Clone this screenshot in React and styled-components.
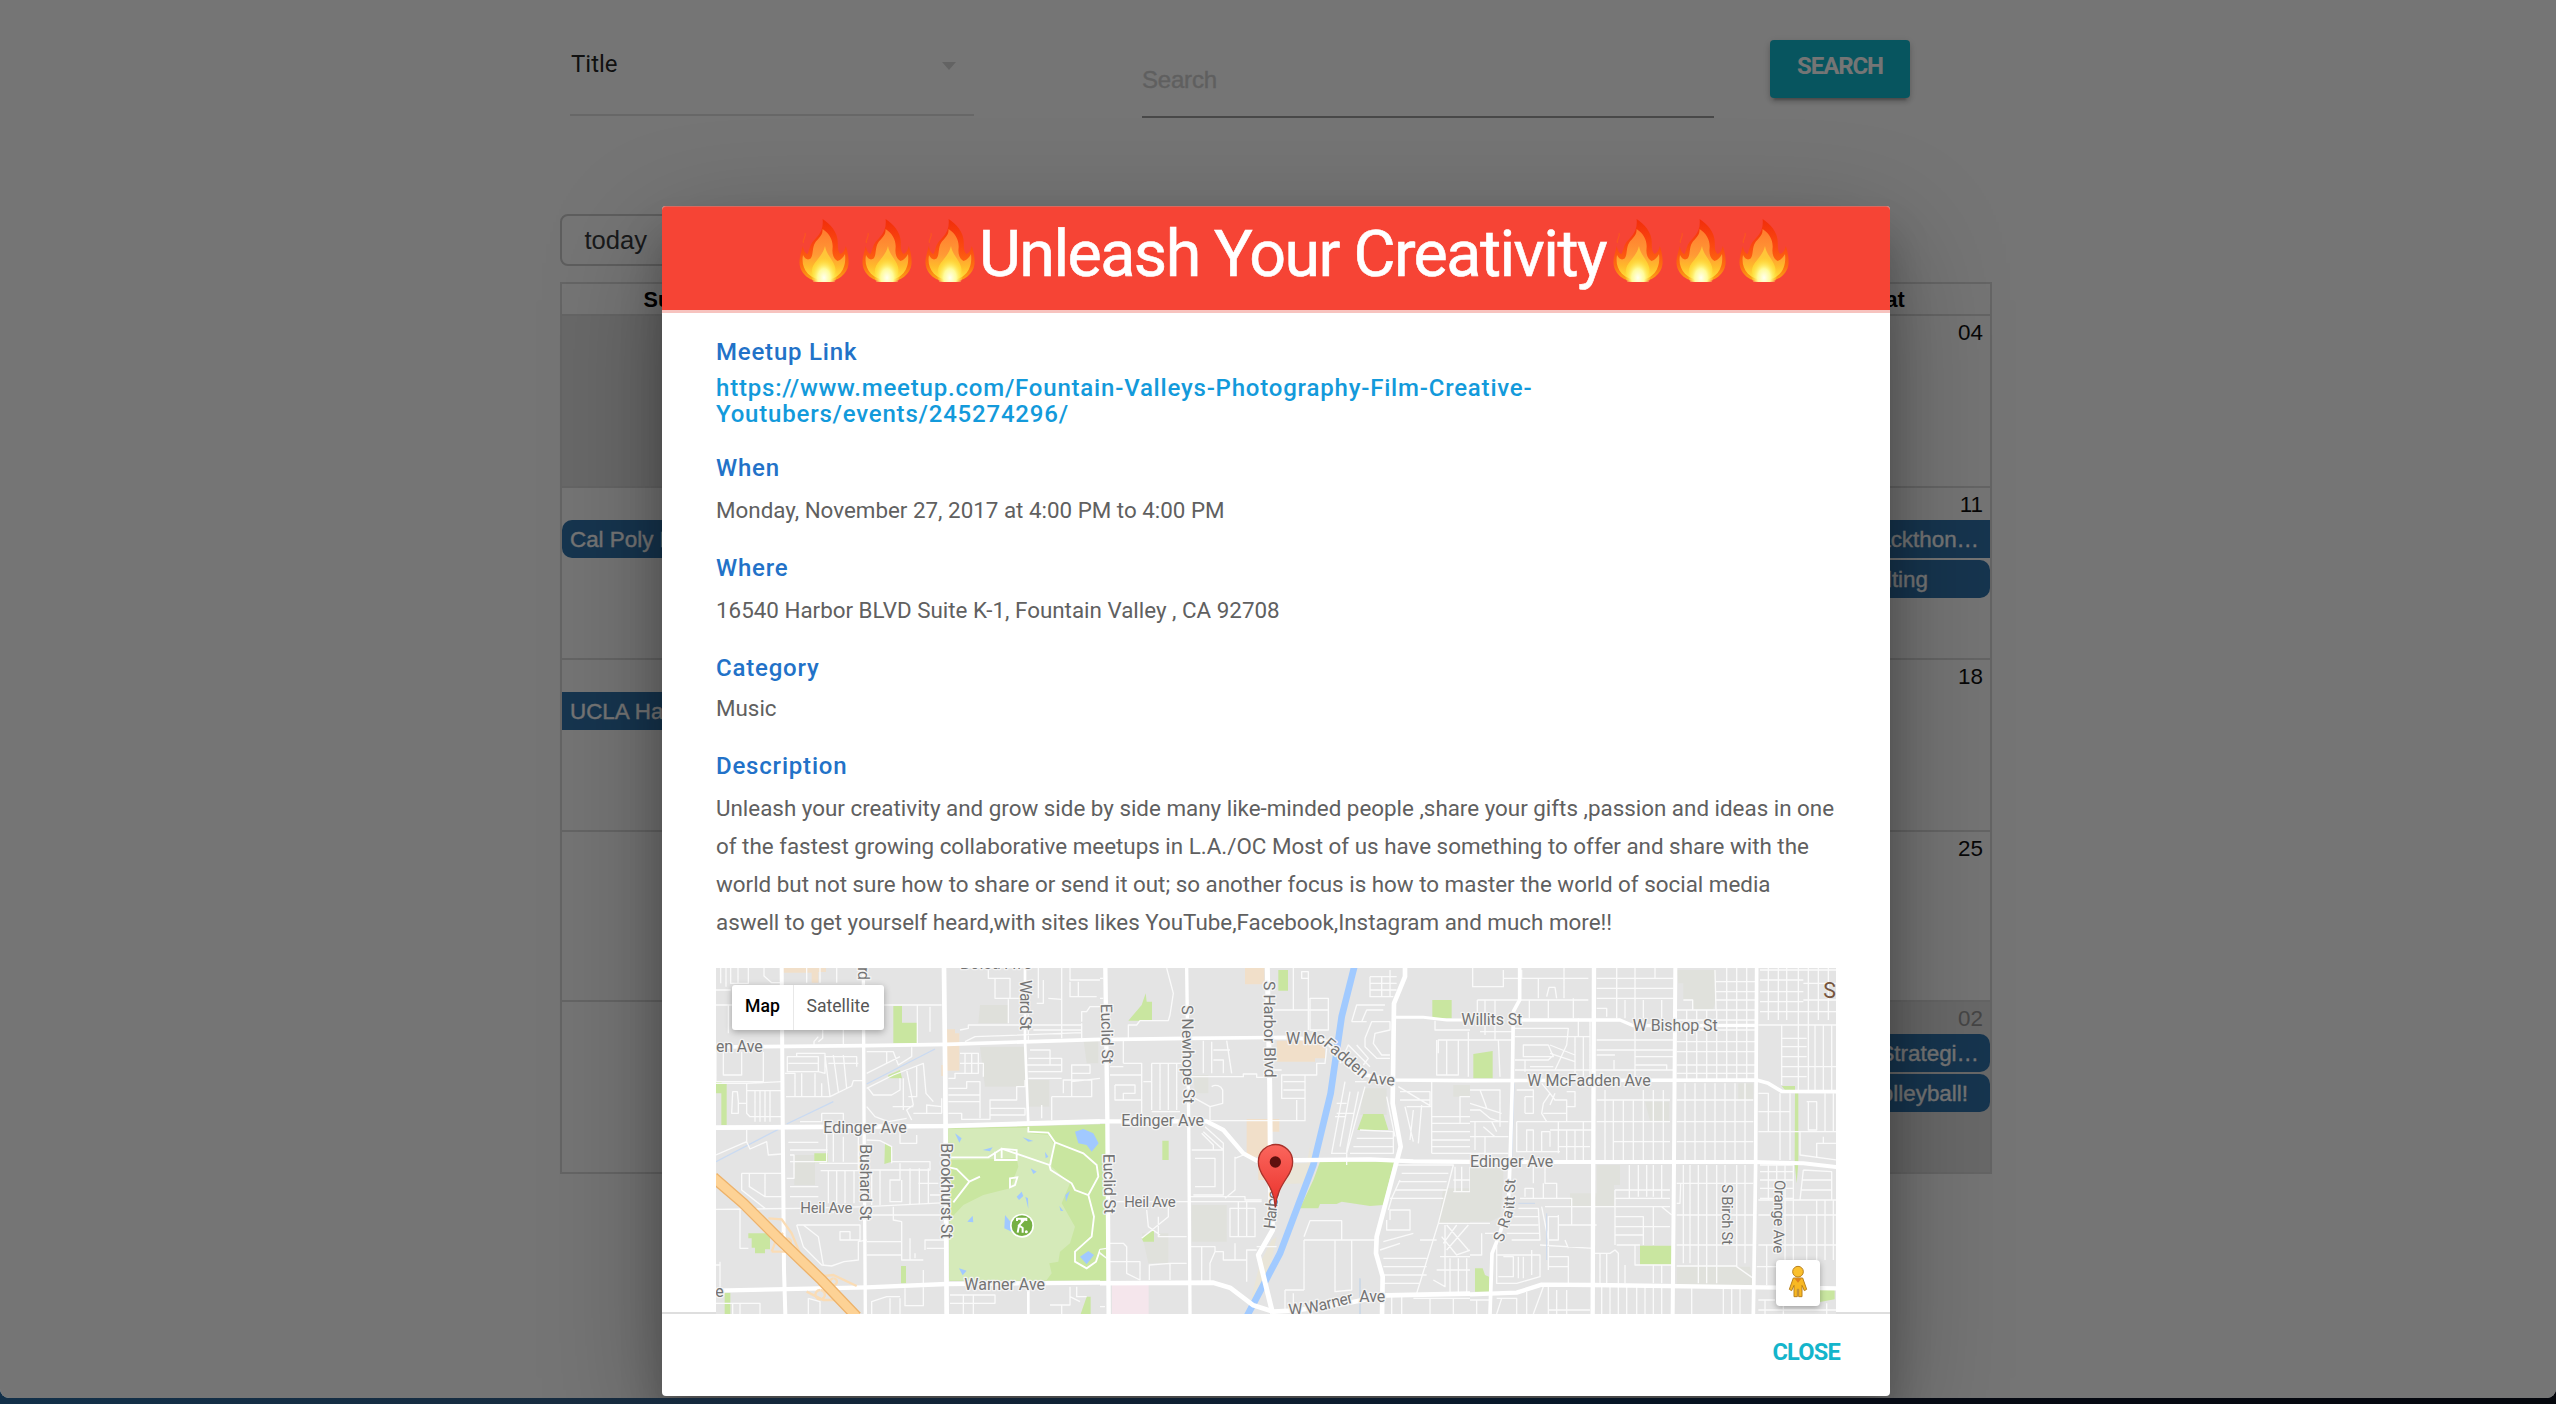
import React from "react";
import styled, { createGlobalStyle } from "styled-components";

const GlobalStyle = createGlobalStyle`
  * { box-sizing: border-box; }
  html, body { margin: 0; padding: 0; }
  body {
    width: 2556px;
    height: 1404px;
    overflow: hidden;
    background: linear-gradient(90deg, #123049 0%, #172c40 22%, #0c1c2e 52%, #061627 62%, #060a14 74%, #05070d 100%);
  }
`;

const helvetica = `"Liberation Sans", Arial, sans-serif`;
const roboto = `Roboto, "Liberation Sans", sans-serif`;

/* ---------- page ---------- */

const Window = styled.div`
  position: relative;
  width: 2556px;
  height: 1398px;
  overflow: hidden;
  background: #fff;
  border-radius: 0 0 9px 9px;
`;

const Page = styled.main`
  width: 1432px;
  margin-left: 560px;
  font-family: ${helvetica};
`;

const Filters = styled.div`
  display: flex;
  align-items: flex-start;
  height: 214px;
  padding-left: 10px;
`;

const Select = styled.div`
  display: flex;
  justify-content: space-between;
  align-items: flex-start;
  width: 404px;
  height: 116px;
  margin-right: 168px;
  padding: 48px 18px 0 1px;
  border-bottom: 2px solid #e0e0e0;
  font: 24px/32px ${roboto};
  color: rgba(0, 0, 0, 0.87);
`;

const Caret = styled.span`
  margin-top: 14px;
  border: 7.5px solid transparent;
  border-top: 8px solid #d8d8d8;
  border-bottom: 0;
`;

const SearchField = styled.div`
  width: 572px;
  height: 118px;
  margin-right: 56px;
  padding-top: 64px;
  border-bottom: 2px solid #9e9e9e;
  font-size: 24px;
  line-height: 32px;
  letter-spacing: -0.2px;
  color: #d0d0d0;
  -webkit-text-stroke: 0.4px #d0d0d0;
`;

const SearchButton = styled.button`
  width: 140px;
  height: 58px;
  margin: 40px 0 0;
  padding: 0 0 6px;
  border: 0;
  border-radius: 4px;
  background: #10bad0;
  box-shadow: 0 4px 5px rgba(0, 0, 0, 0.14), 0 2px 10px rgba(0, 0, 0, 0.12), 0 6px 2px -4px rgba(0, 0, 0, 0.2);
  color: #fff;
  font: 700 24px/32px ${roboto};
  letter-spacing: -1.1px;
`;

const TodayButton = styled.button`
  display: block;
  width: 120px;
  height: 52px;
  margin: 0 0 16px;
  padding: 0 0 0 22.5px;
  border: 2px solid #ccc;
  border-radius: 8px;
  background: #fff;
  color: #373a3c;
  font: 25.6px/43px ${helvetica};
  text-align: left;
`;

const Calendar = styled.section`
  border: 2px solid #ddd;
  font-size: 22.4px;
`;

const WeekHeader = styled.div`
  display: grid;
  grid-template-columns: repeat(7, 1fr);
  height: 30px;
  font-weight: bold;
  font-size: 21.6px;
  line-height: 31px;
  text-align: center;
`;

const Week = styled.div`
  display: grid;
  grid-template-columns: repeat(7, 1fr);
  grid-template-rows: 30px repeat(2, 38px);
  row-gap: 2px;
  height: ${(p) => p.$height}px;
  border-top: 2px solid #ddd;
`;

const DateCell = styled.div`
  grid-row: 1 / 4;
  grid-column: ${(p) => p.$col};
  height: ${(p) => p.$height}px;
  padding: 3px 7px 0 0;
  line-height: 28px;
  text-align: right;
  color: ${(p) => (p.$off ? "#999" : "#111")};
  background: ${(p) => (p.$off ? "#e4e4e4" : "transparent")};
`;

const Event = styled.div`
  grid-column: ${(p) => p.$cols};
  grid-row: ${(p) => p.$line};
  padding: ${(p) => (p.$end ? `0 ${p.$end}px 0 0` : "0 0 0 8px")};
  border-radius: ${(p) => p.$radius};
  background: #3174ad;
  color: #fff;
  -webkit-text-stroke: 0.35px #fff;
  line-height: 40px;
  white-space: nowrap;
  overflow: hidden;
  text-align: ${(p) => (p.$end ? "right" : "left")};
`;

/* ---------- dialog ---------- */

const Overlay = styled.div`
  position: absolute;
  inset: 0;
  display: flex;
  justify-content: flex-start;
  padding: 206px 0 0 662px;
  background: rgba(0, 0, 0, 0.54);
`;

const Dialog = styled.div`
  display: flex;
  flex-direction: column;
  width: 1228px;
  height: 1190px;
  border-radius: 4px;
  background: #fff;
  box-shadow: 0 38px 120px rgba(0, 0, 0, 0.3), 0 30px 40px rgba(0, 0, 0, 0.22);
  font-family: ${roboto};
`;

const DialogHeader = styled.header`
  display: flex;
  align-items: flex-start;
  height: 107px;
  padding: 12px 0 0 130px;
  border-top: 1px solid #d9695f;
  border-bottom: 3px solid #f7c3bf;
  border-radius: 4px 4px 0 0;
  background: #f64435;
  color: #fff;
`;

const DialogTitle = styled.h1`
  margin: -1px 0 0 -2px;
  width: 627px;
  font-size: 64.6px;
  font-weight: 400;
  line-height: 72px;
  letter-spacing: -1.56px;
  white-space: nowrap;
  -webkit-text-stroke: 0.6px #fff;
`;

const FlameBox = styled.span`
  display: flex;
  justify-content: center;
  width: 63px;
  svg { display: block; width: 50px; height: 63px; }
`;

const DialogBody = styled.div`
  height: 1001px;
  padding: 26px 54px 0;
`;

const Field = styled.section`
  margin-bottom: ${(p) => p.$after}px;
`;

const Label = styled.h2`
  margin: 0 0 ${(p) => p.$gap}px;
  color: #2272c8;
  font-size: 24px;
  font-weight: 500;
  line-height: 26px;
  letter-spacing: 0.8px;
`;

const MeetupLink = styled.a`
  display: block;
  width: 900px;
  color: #139adb;
  font-size: 24px;
  font-weight: 500;
  line-height: 26px;
  letter-spacing: 0.8px;
`;

const Value = styled.p`
  margin: 0;
  color: #606060;
  font-size: 22.39px;
  line-height: 38px;
  white-space: nowrap;
`;

const MapFrame = styled.div`
  position: relative;
  width: 1120px;
  height: 346px;
  background: #e4e4e4;
  overflow: hidden;
  > svg { display: block; }
`;

const MapTypes = styled.div`
  position: absolute;
  left: 16px;
  top: 17px;
  display: flex;
  height: 45px;
  border-radius: 3px;
  background: #fff;
  box-shadow: 0 2px 7px rgba(0, 0, 0, 0.3);
`;

const MapType = styled.div`
  width: ${(p) => p.$width}px;
  color: ${(p) => (p.$active ? "#000" : "#555")};
  font-size: 17.6px;
  font-weight: ${(p) => (p.$active ? 500 : 400)};
  line-height: 42px;
  text-align: center;
  & + & { border-left: 1px solid #e8e8e8; padding-right: 2px; }
`;

const Pegman = styled.div`
  position: absolute;
  left: 1060px;
  top: 292px;
  display: flex;
  align-items: center;
  justify-content: center;
  width: 44px;
  height: 46px;
  padding-bottom: 4px;
  border-radius: 4px;
  background: #fff;
  box-shadow: 0 2px 6px rgba(0, 0, 0, 0.3);
`;

const DialogFooter = styled.footer`
  flex: 1;
  display: flex;
  justify-content: flex-end;
  align-items: flex-start;
  margin-top: -2px;
  padding: 24px 50px 0 0;
  background: linear-gradient(#dedede, #dedede) left top / 54px 2px no-repeat,
    linear-gradient(#dedede, #dedede) right top / 54px 2px no-repeat;
  border-radius: 0 0 4px 4px;
`;

const CloseButton = styled.button`
  padding: 0;
  border: 0;
  background: none;
  color: #14b5cb;
  font: 700 23.6px/32px ${roboto};
  letter-spacing: -0.8px;
`;

/* ---------- drawings ---------- */

const Flame = () => (
  <FlameBox>
    <svg viewBox="0 0 50 63">
      <defs>
        <linearGradient id="fl-outer" x1="0" y1="0" x2="0" y2="1">
          <stop offset="0" stopColor="#f22d0a" />
          <stop offset=".45" stopColor="#fb4a10" />
          <stop offset=".75" stopColor="#fd6d11" />
          <stop offset="1" stopColor="#fbae17" />
        </linearGradient>
        <linearGradient id="fl-mid" x1="0" y1="0" x2="0" y2="1">
          <stop offset="0" stopColor="#ff7a2e" />
          <stop offset=".5" stopColor="#ff9a35" />
          <stop offset=".72" stopColor="#ffb92b" />
          <stop offset="1" stopColor="#ffe63a" />
        </linearGradient>
        <radialGradient id="fl-core" cx=".5" cy=".72" r=".5">
          <stop offset="0" stopColor="#fffff0" />
          <stop offset=".45" stopColor="#fffb9a" />
          <stop offset="1" stopColor="#ffe335" stopOpacity="0" />
        </radialGradient>
      </defs>
      <path d="M23.6 0C31 5 39 13 38.800 24C38.700 29 39 33 41.500 35C44 34 46 31 46.800 27C48.500 32 50 39 49.500 45C48.500 55 39 63 25 63C11 63 1 55 .5 44C.3 38 2.500 33 3.800 27C4.500 31 6 34.500 8.500 35C10.500 31 10.500 27 13.500 23C17 18 25 14 23.600 0Z" fill="url(#fl-outer)" />
      <path d="M23.500 10C31 15 34.500 22 33.500 30C33 36 35 40 38.500 42C42 41 44.500 38 46 35C47.500 47 43 60 25 61.500C9 60 1.500 49 4 36C6 40 9 42 12 39C14.500 35 13 29 16 24C19 19 24 17 23.500 10Z" fill="url(#fl-mid)" />
      <path d="M26 27C27 34 31 37 35 45C39 53 34 62 25 62C15 62 11 54 14 47C17 41 24 36 26 27Z" fill="#ffe23c" opacity=".6" />
      <ellipse cx="25" cy="50" rx="14" ry="20" fill="url(#fl-core)" />
      <path d="M6 14C8 18 3 20 4.500 24" fill="none" stroke="#fb5522" strokeWidth="1.200" />
    </svg>
  </FlameBox>
);

const flames = [0, 1, 2];

const MajorRoad = ({ d, w = 12 }) => (
  <path d={d} fill="none" stroke="#fff" strokeWidth={w} strokeLinejoin="round" />
);
const MinorRoads = ({ d }) => <path d={d} fill="none" stroke="#fafafa" strokeWidth="4" strokeLinejoin="round" />;
const Park = ({ d }) => <path d={d} fill="#c9e6a0" />;

const RoadLabel = ({ x, y, len, turn = 0, size = 48, children }) => (
  <text
    x={x}
    y={y}
    textLength={len}
    fontSize={size}
    transform={turn ? `rotate(${turn} ${x} ${y})` : undefined}
    fill="#737373"
    stroke="#f3f3f3"
    strokeWidth="8"
    strokeLinejoin="round"
    paintOrder="stroke"
  >
    {children}
  </text>
);

const WestRoads = () => (
  <g transform="translate(-16 -18) scale(.33333)">
    <path d="M840 290H975V410H855ZM840 165H925V220H835ZM985 390H1048V470H985ZM283 615H345V705H283ZM1150 265H1195V340H1160Z" fill="#dfe0db" />
    <path d="M250 54H378V66H355V98H335V68H250ZM740 238H765V250H778V362H740V378H724V345H740Z" fill="#f1dfc9" />
    <Park d="M580 168H606V218H652V280H580ZM565 375L600 360L606 385H565ZM48 395H65V402H80V525H64V430H48ZM343 610H383V637H343ZM555 580L577 592L575 635L553 642ZM145 850H210V898H195V910H165V893H155V865H145ZM603 948H618V1000H603ZM74 1028H91V1092H74ZM1160 1040H1172V1092H1142Z" />
    <Park d="M745 535L1222 522V992H748Z" />
    <path d="M745 537L980 533L990 550L1045 555L1060 580L1055 650L1110 700L1085 760L1125 830L1110 880L1080 905L1075 935L1048 940L1055 970L1040 990H748V810L790 765L850 735L930 715L955 650L950 625L870 628L745 630Z" fill="#d5eab9" />
    <path d="M1125 545L1150 537L1180 550L1196 580L1175 605L1160 585L1135 580ZM1140 920L1165 903L1182 915L1160 943ZM765 550L785 565L778 578ZM848 600L878 592L870 604ZM968 562L1000 573L985 575ZM992 655L1010 665L1000 672ZM950 740L965 725L970 738L957 750ZM976 740L984 745L985 777ZM1096 735L1110 722L1098 755ZM802 815L818 797L820 817ZM777 955L800 962L788 976ZM915 795L935 820V845L913 835ZM1035 605L1045 620L1037 625ZM1078 768L1090 783H1082Z" fill="#a1c9ff" />
    <path d="M48 635L235 538M260 522L400 455M500 402L705 297" stroke="#c9daf2" strokeWidth="4" fill="none" />
    <path d="M748 622H865L905 596L1048 645L1052 660L1115 700L1125 720L1165 735L1195 680L1190 645L1150 610L1065 577L1045 548L985 545V530M1050 645L1065 577M748 652L770 657L808 695L840 680M808 695L760 757M1165 735L1182 800L1175 860L1125 905L1125 935L1160 955L1188 935L1200 900L1225 880M885 605V630H950V600L905 596V625M930 685L952 682L945 705L930 712Z" fill="none" stroke="#fff" strokeWidth="5.500" />
    <MinorRoads d="M48 120H92M92 54V100H145V54M62 54V100M78 54V110M114 54V100M192 54V78L215 98H245M320 54V98M360 54V98M48 165H245M165 120V240M85 165V250M410 54V98M48 305V395H190V305M125 305V375H70V305M48 400L140 400L245 395M140 400V490L150 500H245M98 425H112L115 455V490H95ZM165 420V515M180 420V515M195 420V515M210 420V515M115 460H140M142 422H245M262 320H355V365H262ZM265 340H355M290 320V310H375V370L355 365M375 315L390 440M400 315L415 425M430 315L440 415M375 320H470V350M258 440H390L455 408L460 392H490M255 370H285V440M305 370V440M345 370V440M365 400V440M385 340L475 340M355 260L342 275V290M368 240V265L355 275M430 240V285M500 305H580L595 345L635 320V292M500 370L600 320M500 415L580 375L670 340L678 430L700 455M560 305V340M620 360L640 465L620 480L635 510M650 350V440L625 440M500 470L525 500L565 515L620 505M505 415L520 435H575L600 420V385M610 385V480M578 470H640M640 490H725V445M680 490V465L725 470M690 170V245M652 165V280M550 165H725M48 615L140 575L150 597L200 575L205 615L245 612M140 575V540M125 670H245M125 670V720L195 775M148 672V710L195 740H245M195 672V740M265 577H355M380 545V635H270M270 600H383M270 710H355M270 740H355M365 490H430V530M365 490V515H300M400 545V635M430 560V635M358 640H500M362 662H490M385 662V760M410 662V760M435 662V760M462 662V760M475 545V660M270 615H282V685H260M500 570L540 572L575 590V640M600 540V580H650V555M575 635H690V660H500M600 640V690H570V755H605V690M630 655V765M658 655V765M685 655V765M515 660V765M540 660V765M655 700H715M690 735H740M48 778L300 775L500 770L740 758M120 778V895H145M395 775L400 790M290 825H480V870H420V845H450V870M290 825L310 890L365 945L395 948L432 935L475 930V875L500 870M310 825L355 860L370 945M500 795H740M580 770V810L605 815V895M500 875H605V930H670M630 865V930M500 915H605M675 900V870H740M680 895H740M670 960V1000M645 925V910M60 935V1010M48 945H60M48 1060H180V1092M98 1060V1092M120 1060V1092M325 1045L360 1055V1092M515 1092V1055L560 1040H600M570 1045V1092M600 1045V1092M615 1015V1067H670V1012M325 1092V1045M750 1060H885V1035H750M790 1035V1092M820 1035V1092M1050 1065H1110V1010M1085 1065V1092M1110 1040L1140 1055M1130 1010V1040H1160M865 54V85H885V145H960M885 85H930V145M780 240L805 235V225H1145V240H1000M795 275L825 260L1145 248M1145 220V265M925 148V220M1015 54V145M1085 54V265M1110 54V90H1200M1110 95V140H1190M1135 95V140M1030 90V160H1010M1045 145L1085 148M1200 170H1170L1160 185H1145V215M975 165H985V270M990 300H1050V345H1085V365H985M780 310H835V370H765V385H745M795 310V370M815 310V370M780 340H850V380M745 415H800V395H840V505M745 435H840M745 455H840M745 490H785V508H870V450H950V410H975V390M870 475H975V495H870M1025 465V505M1055 440V510M1055 440H1175V390H1090V430M985 385H1085M1115 345H1170V370H1115ZM1115 345V440M1115 395L1200 385M980 345H1085V325H985" />
    <MajorRoad d="M975 54V270L985 525M985 1000V1092" w={8} />
    <MajorRoad d="M245 54L248 500L252 960L256 1092" />
    <MajorRoad d="M490 54L492 500L496 1092" w={10} />
    <MajorRoad d="M732 54L736 400L740 1092" w={14} />
    <MajorRoad d="M48 291L500 287L740 283L1200 268" w={11} />
    <MajorRoad d="M48 533L740 528L1200 514" w={14} />
    <MajorRoad d="M48 1022L500 1012L740 1002L1200 998" w={13} />
    <path d="M205 805L245 808L275 850L300 910M215 905L232 860L250 850M215 905H255L240 880M320 1025L370 1050H410M350 980L400 975L470 1008M360 1020A14 14 0 1 0 361 1020M400 985A10 10 0 1 0 401 985M262 865A10 10 0 1 0 263 865" fill="none" stroke="#fadcb5" strokeWidth="7" />
    <path d="M40 682L130 760L235 865L365 990L470 1100" fill="none" stroke="#edb26a" strokeWidth="34" />
    <path d="M40 682L130 760L235 865L365 990L470 1100" fill="none" stroke="#fdd295" strokeWidth="26" />
    <RoadLabel x={780} y={58} len={215}>Bolsa Ave</RoadLabel>
    <RoadLabel x={475} y={52} len={38} turn={90}>rd</RoadLabel>
    <RoadLabel x={960} y={90} len={150} turn={90}>Ward St</RoadLabel>
    <RoadLabel x={48} y={305} len={140}>en Ave</RoadLabel>
    <RoadLabel x={370} y={549} len={250}>Edinger Ave</RoadLabel>
    <RoadLabel x={480} y={583} len={228} turn={90}>Bushard St</RoadLabel>
    <RoadLabel x={724} y={580} len={286} turn={90}>Brookhurst St</RoadLabel>
    <RoadLabel x={301} y={790} len={156} size={45}>Heil Ave</RoadLabel>
    <RoadLabel x={793} y={1021} len={242}>Warner Ave</RoadLabel>
    <RoadLabel x={46} y={1042} len={22}>e</RoadLabel>
    <circle cx="966" cy="827" r="36" fill="#fff" />
    <circle cx="966" cy="827" r="31" fill="#76b043" />
    <path d="M951 813V806H979V813M962 812H970L957 826L968 834V848M957 826L953 848" fill="none" stroke="#fff" strokeWidth="6" />
    <circle cx="979" cy="845" r="4.500" fill="#fff" />
  </g>
);

const CentralRoads = () => (
  <g transform="translate(364 -18) scale(.33333)">
    <Park d="M0 524L82 521V992H0Z" />
    <path d="M590 272H735V325H705V335H590ZM495 54H553V103H495ZM500 507H598V545H575V690H535V620H500Z" fill="#f1dfc9" />
    <path d="M690 590L700 640L680 700L620 702L560 690V640H680ZM590 860L560 1000L500 1092L510 1060L540 940L575 870Z" fill="#e9e5d8" />
    <path d="M335 765H440V875H335ZM185 850H265V940H205ZM340 375H385V430H345ZM850 415H920V495H840ZM0 275H60V340H0ZM1090 715H1200V820H1075ZM1120 405H1175V440H1120Z" fill="#e0e1dc" />
    <path d="M96 1005H206V1092H96Z" fill="#f5e6ec" />
    <Park d="M595 60H624V122H595ZM197 130L200 155H216V212H145L185 165ZM1057 150H1115V205H1057ZM850 492H910L925 540H832ZM720 635H942L910 765L870 768L785 755L770 762H720L715 775H660L700 690ZM247 572H266V630H247ZM185 865L222 840V875H190ZM1180 310H1200V385H1180ZM1188 955H1200V1020H1188ZM15 1050L35 1040L32 1060L15 1092H0Z" />
    <MinorRoads d="M0 85H70M0 110H45V145H0M45 145H70M0 195H15V185H70M130 340V268M130 340H185V500M260 54L280 130L270 195L265 212H180L170 225H145V268M90 350H130M90 375H185V450H105M105 405H165V430H130V450H105V405M0 390H30V440H0M215 340H320M215 340V480M240 340V480M265 340V480M290 340V480M190 395H215M215 485H300M320 380H490V372H530V382H565M370 272V370M395 275V370M400 300H450M400 330H430V370M440 272L455 370M395 410A22 22 0 0 1 428 420V460L390 470L345 445M390 470V512M385 512H565M570 512H675V375H605V445H675M610 395H675M610 420H675M650 450V510M570 180H745V240H690V145H745V180M640 54V180M670 65H685V85H665V65ZM685 85V240M605 375H710V340H735L740 295M570 360H605M815 215L830 165H915M815 215H860M845 215L860 180H910M870 80V140H940M905 80V140M930 60V140M870 80H950M870 100H950M870 120H950M855 265L875 215H930V240L885 250L880 280L905 315H930M855 265V290L890 325L930 325M780 340L805 285L870 350M830 285L865 325L850 345M795 395L755 610H800L855 410M810 425L780 590M835 425L800 600M770 460H800M765 500H795M820 490L770 490M825 395H860M840 540L940 545V610H810M830 565H940M820 590H940M800 600V645M920 440L945 560M960 425H1050V470H980M960 450H1050M1000 480L990 570M1025 465L1015 580M955 410L1055 470V610M975 470L1000 575M1055 500H1200M1055 520H1200M1055 545H1200M1055 570H1200M1055 590H1200M1055 610H1200M1055 395V470M1200 440H1140V520M1065 212V240H1180V270H1075V310M1070 270V375H1135V270M1100 270V375M1165 245V380M335 600H430V735H340M345 625H405V710H345M430 660V600L370 545M365 550L400 585V600M375 530L430 580L430 600M465 625L490 615M435 745L465 720V620M330 740H495V750H545M90 755H545M155 755V755M130 755L185 770V750M200 780L205 830L240 855M265 755V800L185 865M235 800V860H320M450 755H545M450 775H525V860H450ZM475 755V860M500 755V860M90 880H130L140 890V970L180 990V935H90M208 990V945L270 940H320M270 940V990M330 890H405V905H430V930H500V995M405 905L390 940V995M365 890V995M465 930V880M500 930V900H530M530 890H590M672 860L690 812H785V870M672 870H885M672 870V1020M765 870V1025L815 1020V870M615 1020H672M615 1020V1085M640 1030V1070M930 810V780L990 780V840H920V810M945 645H1120L1075 820M965 670H1105M955 695H1100M945 720H1100M930 745H1090M925 780L935 745L960 690M1120 725H1200M1125 725V650M1145 725V650M1170 725V650M1200 690H1120M1075 820H1200M1075 820L1010 1030M1095 825V1010L1060 990M910 925H1040M910 950H1040M910 975H1040M910 1000H1020M960 880L900 900M1000 850L910 875M1020 870H1070M1080 920H1200M1070 960H1200V1020M1085 860L1130 915L1200 890M1100 825L1165 900M1130 825L1090 880M1165 825L1100 900M1110 925V1030M1135 925V1030M1160 925V1030M935 1030V1092M1000 1045H1200M965 1035V1092M1050 1045V1092M1120 1045V1092M0 635L40 650L55 680L20 735L45 790L30 860L0 890M0 735L20 735M0 950L25 950L60 910L80 925L50 900L80 895M20 1050V1092M0 1070H75" />
    <path d="M828 30L785 200L752 430L700 645L600 910L500 1100" fill="none" stroke="#a1caff" strokeWidth="20" />
    <path d="M0 550L30 537L55 575L45 605L0 575ZM0 920L20 903L42 912L15 943L0 935Z" fill="#a1c9ff" />
    <path d="M840 985V1092" stroke="#b9cfe8" strokeWidth="3" />
    <MajorRoad d="M76 54L82 500L86 1092" w={13} />
    <MajorRoad d="M320 54L326 500L330 1092" w={10} />
    <MajorRoad d="M562 54L569 400L572 740L578 840L535 915L578 1090" w={15} />
    <MajorRoad d="M0 270L320 265L640 262L740 275L830 370L940 390L1200 392" w={11} />
    <MajorRoad d="M0 514H380L430 540L490 610L530 632L870 628L1000 634L1200 636" w={13} />
    <MajorRoad d="M0 1000L400 998L450 1013L520 1066L580 1085L640 1082L800 1060L920 1036L1200 1030" w={14} />
    <MajorRoad d="M975 40V80L942 160L938 460L962 590L890 860L888 910L908 980L906 1100" w={14} />
    <MajorRoad d="M945 202H1030L1100 210H1200" w={9} />
    <RoadLabel x={62} y={162} len={180} turn={88.5}>Euclid St</RoadLabel>
    <RoadLabel x={305} y={166} len={295} turn={89}>S Newhope St</RoadLabel>
    <RoadLabel x={551} y={93} len={290} turn={89.5}>S Harbor Blvd</RoadLabel>
    <RoadLabel x={124} y={529} len={248}>Edinger Ave</RoadLabel>
    <RoadLabel x={70} y={612} len={180} turn={89}>Euclid St</RoadLabel>
    <RoadLabel x={133} y={772} len={154} size={45}>Heil Ave</RoadLabel>
    <RoadLabel x={728} y={286} len={158} turn={40}>Fadden</RoadLabel>
    <RoadLabel x={618} y={282} len={117}>W Mc</RoadLabel>
    <RoadLabel x={864} y={400} len={80} turn={5}>Ave</RoadLabel>
    <RoadLabel x={584} y={838} len={130} turn={-84}>Harbor</RoadLabel>
    <RoadLabel x={626} y={1096} len={42} turn={-4}>W</RoadLabel>
    <RoadLabel x={680} y={1093} len={146} turn={-14}>Warner</RoadLabel>
    <RoadLabel x={838} y={1056} len={78}>Ave</RoadLabel>
  </g>
);

const EastRoads = () => (
  <g transform="translate(754 -18) scale(.33333)">
    <path d="M620 60H738V150L730 178H672L665 150H640V100H625ZM0 650H100V700L90 800L60 815H0ZM380 645H450V705H432V770H300V730H380ZM620 950H840L850 1005H620ZM525 455H598V512H540ZM805 400H850V450H805Z" fill="#e0e1dc" />
    <Park d="M10 312L68 303V385H10ZM510 887H605V944H510ZM15 955H38L45 975L57 980V1025H15ZM1050 1018H1094V1048L1050 1056ZM935 408H975V420H945ZM975 430H985V640L980 700L974 640Z" />
    <MinorRoads d="M8 54V110H100V60M100 85H355M205 85V145M230 140L237 112H255L260 145M22 150H355M22 150V210M45 150V255M30 245H130M75 150V270M0 270H130M178 150V205M235 150V205M282 54V145M310 145V205M155 85V60M85 270L90 380M380 85H610M440 54V205M495 54V270M380 115H610M380 145H610M555 54V85M520 150V205M575 150V205M380 175H410V200M465 150V205M135 235H295L290 285L255 360M325 205V260M360 212V385M160 285H235L250 320H160ZM165 330H235L245 320M180 350H250M240 285L315 315V335L240 310M135 360H610M135 330H165V365M135 260H360M315 260V385M340 260V385M380 270H610M380 300H610M495 270V380M495 345H590V360M432 330V360M380 315H435M495 320H610M620 180H855M640 150H668V180M735 60L738 180M735 95H855M735 125H855M735 150H855M770 54V390M800 54V390M830 54V390M740 180V390M710 180V390M680 180V390M650 180V390M620 210H855M620 240H855M620 275H855M620 305H855M620 345H855M620 370H855M870 60H1100M870 90H1000M870 125H1000M870 155H1000M870 185H1000M895 54V210M925 54V210M950 54V210M985 54V420M1015 54V420M1045 54V210M1075 54V210M1000 100H1100M1000 150H1100M1000 185H1100M865 225H1100M935 225V405M935 265H1010M935 290H1010M935 320H1010M935 350H1010M935 380H1010M1035 225V420M1060 225V420M1085 225V420M1010 350H1100M0 420H90V530M0 460L95 490M30 420L45 460L50 475M0 480H30L60 505L90 515M0 515H115M0 560H115M15 515V600M40 530L75 560M65 515L80 545M0 610H115M45 560V610M140 420H190V490H165M165 440H190M165 440V490M215 400L240 430L220 460L215 490L230 515M240 430L255 450H290L290 515M255 430L240 465M290 425H315V470H290M220 490H290M140 515H370M140 515V605H215V545H240V590M170 605V540H190V605M240 540H370M265 515V610M290 540V630M315 540V630M340 515V630M150 605H270M265 590H360M430 450V630M405 420V630M380 450H600M460 450V630M490 450V630M520 420V630M550 420V630M580 420V630M380 515H600M430 575H600M645 400V630M675 400V630M705 400V630M735 400V630M765 400V630M795 400V630M825 400V630M620 450H850M620 515H850M620 575H850M865 430H895V545M865 485H960M865 545H1100M930 430V630M960 430V630M1010 455H1040V540H1015V455M1065 430V545M1090 430V545M990 545V615L1100 630M1040 620V580H1100M1060 560V580M478 645V745M505 645V740M530 645V740M550 645V740M575 645V745M435 720H600M435 745H600M380 770H600M435 720V885M435 800H520V885M435 830H600M550 770V885M575 770L605 795M435 855H520M225 770H380M380 825H265V800H235V870H265V795M225 645V700H260V745H220V700M190 745V715H165V740M150 745H305V825M305 770H380M145 775H205L210 870H125M130 800H205M120 825H205M110 850H210M215 770L235 870V960M190 645V700M45 850H80V915M35 850V915H0M0 820H60M80 915H210V980L140 1000H80V915M100 920H130V980H85M145 920V985M160 920V985M185 900V975M210 885L370 895M235 920H295V1000M235 950H295M285 870L295 895M370 910H420L435 900L445 910V1000M390 910V1000M410 910V1000M440 885H510M465 945V1000M495 885V945H605M550 945V1000M575 945V1000M640 645V940M660 645V940M685 645V1000M710 645V1000M740 645V1000M765 645V700M800 645V950L850 985M825 645V940M620 700H850M620 760H630L632 700M620 795H850M620 885H850M620 948H800M870 645H970M870 665H970M870 690H970M870 715H970M870 745H970M895 645V750M920 645V700M945 645V930M970 645V930M865 750H1100M865 795H1100M865 885H1100M1000 660L1085 665V750H990L1000 660M995 690H1085M995 720H1085M1040 750V930M1065 750V930M1090 750V930M1010 795V930M860 950H920M890 885V1005M235 1010V1092M260 1020V1092M290 1020V1092M220 1010L190 1092M80 1045H140V1092M95 1045L80 1092M170 1025V1092M0 1050H60M20 1050V1092M395 1010V1092M420 1010V1092M445 1010V1092M470 1010V1092M500 1010V1092M525 1010V1092M550 1010V1092M575 1010V1092M665 1015V1092M760 1015V1092M785 1015V1092M810 1015V1092M865 1050H915M885 1050V1092M865 1080H1100M235 1080H360M940 1060V1092M1070 1060V1092" />
    <path d="M132 400L125 640M145 760H195M230 790V930" stroke="#ccd9ec" strokeWidth="3" fill="none" />
    <MajorRoad d="M149 54V150L130 185L127 400L120 640L115 760L90 850L66 910L60 1092" w={11} />
    <MajorRoad d="M372 54L368 1092" w={13} />
    <MajorRoad d="M616 54L612 640L608 1092" w={12} />
    <MajorRoad d="M860 54L857 640L850 1092" w={11} />
    <MajorRoad d="M150 210H450L490 227L860 226" w={10} />
    <MajorRoad d="M0 392L860 390L895 400L935 424L1100 425" w={11} />
    <MajorRoad d="M0 636H850L1000 640L1100 651" w={12} />
    <MajorRoad d="M0 1033L140 1028L215 1004L370 1005L1100 1015" w={13} />
    <RoadLabel x={488} y={243} len={255}>W Bishop St</RoadLabel>
    <RoadLabel x={172} y={408} len={370}>W McFadden Ave</RoadLabel>
    <RoadLabel x={98} y={878} len={98} turn={-71} size={45}>S Ra</RoadLabel>
    <RoadLabel x={132} y={778} len={90} turn={-87} size={45}>itt St</RoadLabel>
    <RoadLabel x={755} y={703} len={182} turn={90} size={45}>S Birch St</RoadLabel>
    <RoadLabel x={914} y={690} len={220} turn={91} size={45}>Orange Ave</RoadLabel>
    <text x="1060" y="143" fontSize="64" fill="#76553c">S</text>
  </g>
);

const Marker = () => (
  <g transform="translate(364 -18) scale(.33333)">
    <defs>
      <linearGradient id="pin" x1="0" y1="0" x2="0" y2="1">
        <stop offset="0" stopColor="#fb665d" />
        <stop offset="1" stopColor="#e9302a" />
      </linearGradient>
    </defs>
    <path
      d="M586 772C583 730 570 710 552 682C542 667 535 654 535 635A51 51 0 0 1 638 635C638 654 631 667 621 682C603 710 590 730 586 772Z"
      fill="url(#pin)"
      stroke="#a8322b"
      strokeWidth="4"
    />
    <circle cx="586" cy="636" r="17" fill="#5f100e" />
  </g>
);

const StreetMap = () => (
  <svg width="1120" height="346" viewBox="0 0 1120 346" fontFamily={roboto}>
    <defs>
      <clipPath id="mid-tile"><path d="M384 0H754V346H384Z" /></clipPath>
      <clipPath id="west-tile"><path d="M0 0H384V346H0Z" /></clipPath>
      <clipPath id="east-tile"><path d="M754 0H1120V346H754Z" /></clipPath>
    </defs>
    <g clipPath="url(#west-tile)"><WestRoads /></g>
    <g clipPath="url(#east-tile)"><EastRoads /></g>
    <g clipPath="url(#mid-tile)"><CentralRoads /></g>
    <g transform="translate(754 -18) scale(.33333)">
      <RoadLabel x={-26} y={225} len={183}>Willits St</RoadLabel>
      <RoadLabel x={0} y={652} len={250}>Edinger Ave</RoadLabel>
    </g>
    <Marker />
  </svg>
);

const PegmanFigure = () => (
  <svg width="22" height="34" viewBox="0 0 66 102">
    <path d="M19 42H47L59 76L52 80L45 64V98H35V76H31V98H21V64L14 80L7 76Z" fill="#f8b822" stroke="#b9811d" strokeWidth="3" strokeLinejoin="round" />
    <path d="M22 43H44L33 56Z" fill="#e0821b" />
    <circle cx="33" cy="23" r="16" fill="#fbc02d" stroke="#b9811d" strokeWidth="3" />
  </svg>
);

export default function App() {
  return (
    <>
      <GlobalStyle />
      <Window>
        <Page>
          <Filters>
            <Select>
              Title
              <Caret />
            </Select>
            <SearchField>Search</SearchField>
            <SearchButton>SEARCH</SearchButton>
          </Filters>
          <TodayButton>today</TodayButton>
          <Calendar>
            <WeekHeader>
              {["Sun", "Mon", "Tue", "Wed", "Thu", "Fri", "Sat"].map((d) => (
                <span key={d}>{d}</span>
              ))}
            </WeekHeader>
            <Week $height={172}>
              <DateCell $col={1} $off $height={170} />
              <DateCell $col={7}>04</DateCell>
            </Week>
            <Week $height={172}>
              <DateCell $col={7}>11</DateCell>
              <Event $cols="1 / 4" $line={2} $radius="10px 0 0 10px">Cal Poly Hackathon</Event>
              <Event $cols="6 / 8" $line={2} $radius="0" $end={11}>LA Hackthon…</Event>
              <Event $cols="6 / 8" $line={3} $radius="10px" $end={62}>Consulting</Event>
            </Week>
            <Week $height={172}>
              <DateCell $col={7}>18</DateCell>
              <Event $cols="1 / 3" $line={2} $radius="0">UCLA Hackathon</Event>
            </Week>
            <Week $height={170}>
              <DateCell $col={7}>25</DateCell>
            </Week>
            <Week $height={172}>
              <DateCell $col={7} $off $height={170}>02</DateCell>
              <Event $cols="6 / 8" $line={2} $radius="10px" $end={11}>Business Strategi…</Event>
              <Event $cols="6 / 8" $line={3} $radius="10px" $end={22}>Beach Volleyball!</Event>
            </Week>
          </Calendar>
        </Page>

        <Overlay>
          <Dialog role="dialog">
            <DialogHeader>
              {flames.map((f) => <Flame key={f} />)}
              <DialogTitle>Unleash Your Creativity</DialogTitle>
              {flames.map((f) => <Flame key={f} />)}
            </DialogHeader>
            <DialogBody>
              <Field $after={28}>
                <Label $gap={10}>Meetup Link</Label>
                <MeetupLink>
                  https://www.meetup.com/Fountain-Valleys-Photography-Film-Creative-
                  <br />
                  Youtubers/events/245274296/
                </MeetupLink>
              </Field>
              <Field $after={26}>
                <Label $gap={10}>When</Label>
                <Value>Monday, November 27, 2017 at 4:00 PM to 4:00 PM</Value>
              </Field>
              <Field $after={26}>
                <Label $gap={10}>Where</Label>
                <Value>16540 Harbor BLVD Suite K-1, Fountain Valley , CA 92708</Value>
              </Field>
              <Field $after={26}>
                <Label $gap={8}>Category</Label>
                <Value>Music</Value>
              </Field>
              <Field $after={27}>
                <Label $gap={10}>Description</Label>
                <Value>
                  Unleash your creativity and grow side by side many like-minded people ,share your gifts ,passion and ideas in one
                  <br />
                  of the fastest growing collaborative meetups in L.A./OC Most of us have something to offer and share with the
                  <br />
                  world but not sure how to share or send it out; so another focus is how to master the world of social media
                  <br />
                  aswell to get yourself heard,with sites likes YouTube,Facebook,Instagram and much more!!
                </Value>
              </Field>
              <MapFrame>
                <StreetMap />
                <MapTypes>
                  <MapType $active $width={61}>Map</MapType>
                  <MapType $width={91}>Satellite</MapType>
                </MapTypes>
                <Pegman>
                  <PegmanFigure />
                </Pegman>
              </MapFrame>
            </DialogBody>
            <DialogFooter>
              <CloseButton>CLOSE</CloseButton>
            </DialogFooter>
          </Dialog>
        </Overlay>
      </Window>
    </>
  );
}
